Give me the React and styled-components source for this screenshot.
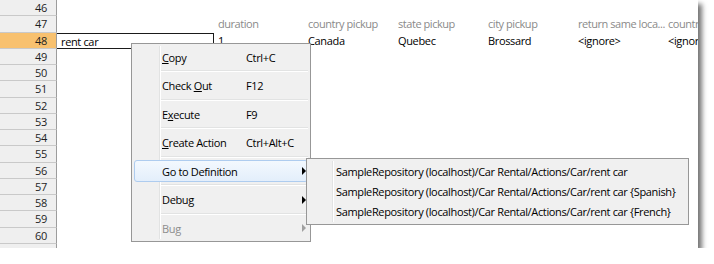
import React from 'react';
import styled, { createGlobalStyle } from 'styled-components';

const GlobalStyle = createGlobalStyle`
  body {
    margin: 0;
    background: #fff;
    font-family: "Open Sans", "Noto Sans", sans-serif;
    letter-spacing: -0.35px;
  }
`;

const Frame = styled.div`
  position: relative;
  width: 698px;
  height: 248px;
  overflow: hidden;
  background: #fff;
  box-shadow: 4px 4px 5px rgba(0, 0, 0, 0.55);
`;

const Row = styled.div`
  display: flex;
  height: 16.25px;
  font-size: 11px;
  line-height: 15px;
`;

const RowHeader = styled.div`
  flex: none;
  width: 57px;
  box-sizing: border-box;
  padding-right: 9px;
  text-align: right;
  color: #1e1e1e;
  background: ${({ selected }) => (selected ? '#f8c16f' : '#efefef')};
  border-right: 1px solid #9c9c9c;
  border-bottom: 1px solid #c9c9c9;
`;

const NameCell = styled.div`
  flex: none;
  width: 157px;
  box-sizing: border-box;
  padding-left: 4px;
  color: #000;
  border: 1px solid ${({ editing }) => (editing ? '#1a1a1a' : 'transparent')};
  border-left: none;
`;

const DataCell = styled.div`
  flex: none;
  width: 90px;
  box-sizing: border-box;
  padding-left: 4px;
  white-space: nowrap;
  letter-spacing: ${({ head }) => (head ? '-0.45px' : 'inherit')};
  color: ${({ head }) => (head ? '#8a8a8a' : '#000')};
`;

const Menu = styled.div`
  position: absolute;
  left: ${({ x }) => x}px;
  top: ${({ y }) => y}px;
  width: ${({ w }) => w}px;
  box-sizing: border-box;
  padding: ${({ pad }) => pad}px 2px;
  background: #f0f0f0;
  border: 1px solid #979797;
  font-size: 11px;
  color: #000;

  &::before {
    content: '';
    position: absolute;
    top: 2px;
    bottom: 2px;
    left: ${({ gutter }) => gutter}px;
    width: 1px;
    background: #e2e3e3;
    border-right: 1px solid #fff;
  }
`;

const Item = styled.div`
  position: relative;
  display: flex;
  align-items: center;
  height: ${({ h }) => h}px;
  box-sizing: border-box;
  padding-left: ${({ indent }) => indent}px;
  border: 1px solid ${({ active }) => (active ? '#aeccef' : 'transparent')};
  border-radius: 3px;
  background: ${({ active }) =>
    active ? 'linear-gradient(#f3f8fe, #e3eefb)' : 'transparent'};
  color: ${({ disabled }) => (disabled ? '#8d8d8d' : '#000')};
  white-space: nowrap;
`;

const Label = styled.span`
  width: 84px;
`;

const Key = styled.span`
  flex: 1;
`;

const Arrow = styled.svg`
  position: absolute;
  right: 1px;
  top: 50%;
  margin-top: -4px;
`;

const Separator = styled.div`
  height: 6.5px;
  margin-left: 26px;
  display: flex;
  align-items: center;

  &::after {
    content: '';
    flex: 1;
    height: 1px;
    background: #e2e3e3;
    border-bottom: 1px solid #fff;
  }
`;

const columns = [
  ['duration', '1'],
  ['country pickup', 'Canada'],
  ['state pickup', 'Quebec'],
  ['city pickup', 'Brossard'],
  ['return same loca...', '<ignore>'],
  ['country', '<ignore>'],
];

const menuItems = [
  { label: <><u>C</u>opy</>, key: 'Ctrl+C' },
  { label: <>Check <u>O</u>ut</>, key: 'F12' },
  { label: <>E<u>x</u>ecute</>, key: 'F9' },
  { label: <><u>C</u>reate Action</>, key: 'Ctrl+Alt+C' },
  { label: 'Go to Definition', sub: true, active: true },
  { label: 'Debug', sub: true },
  { label: 'Bug', sub: true, disabled: true },
];

const definitions = [
  'SampleRepository (localhost)/Car Rental/Actions/Car/rent car',
  'SampleRepository (localhost)/Car Rental/Actions/Car/rent car {Spanish}',
  'SampleRepository (localhost)/Car Rental/Actions/Car/rent car {French}',
];

const rowNumbers = Array.from({ length: 16 }, (_, i) => 46 + i);

const App = () => (
  <>
    <GlobalStyle />
    <Frame>
      {rowNumbers.map(n => (
        <Row key={n}>
          <RowHeader selected={n === 48}>{n}</RowHeader>
          <NameCell editing={n === 48}>{n === 48 ? 'rent car' : ''}</NameCell>
          {n === 47 &&
            columns.map(([head]) => (
              <DataCell head key={head}>
                {head}
              </DataCell>
            ))}
          {n === 48 &&
            columns.map(([head, value]) => <DataCell key={head}>{value}</DataCell>)}
        </Row>
      ))}

      <Menu x={131} y={43} w={180} pad={2} gutter={27}>
        {menuItems.map((item, i) => (
          <React.Fragment key={i}>
            {i > 0 && <Separator />}
            <Item h={22} indent={27} active={item.active} disabled={item.disabled}>
              <Label>{item.label}</Label>
              {item.key && <Key>{item.key}</Key>}
              {item.sub && (
                <Arrow width="4" height="8" viewBox="0 0 4 8">
                  <path d="M0 0 L4 4 L0 8 Z" fill={item.disabled ? '#a0a0a0' : '#000'} />
                </Arrow>
              )}
            </Item>
          </React.Fragment>
        ))}
      </Menu>

      <Menu x={306} y={158} w={383} pad={2} gutter={25}>
        {definitions.map(d => (
          <Item h={20.3} indent={26} key={d}>
            {d}
          </Item>
        ))}
      </Menu>
    </Frame>
  </>
);

export default App;
